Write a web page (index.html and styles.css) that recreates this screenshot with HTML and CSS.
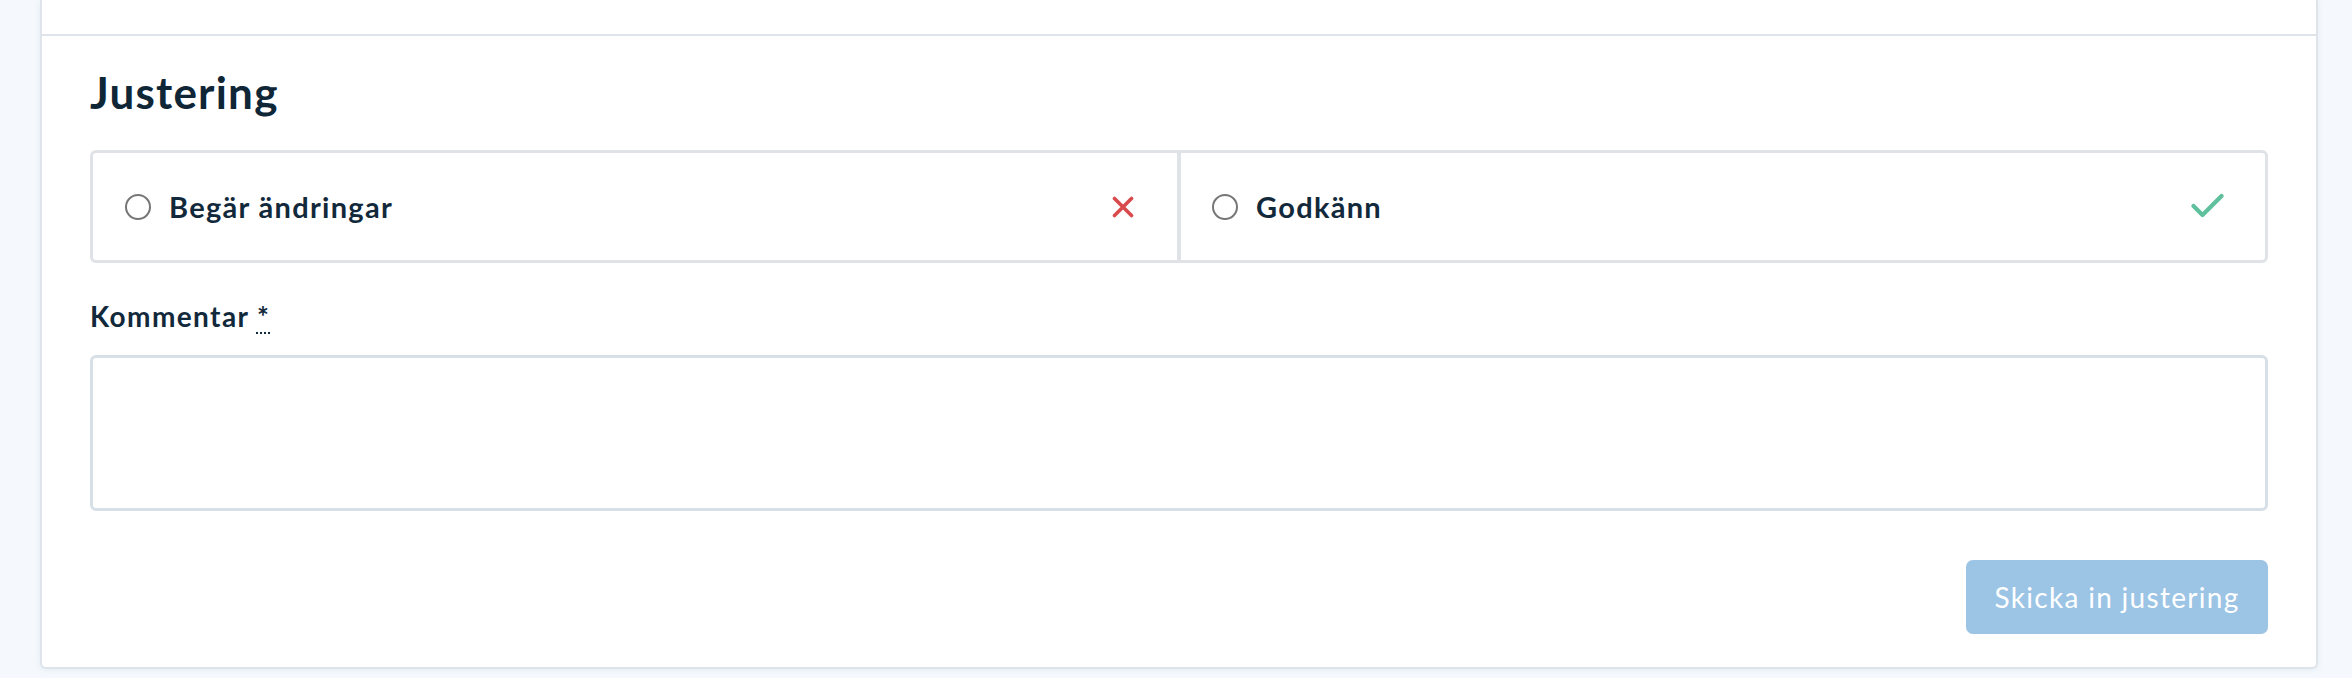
FILE: index.html
```html
<!DOCTYPE html>
<html lang="sv">
<head>
<meta charset="utf-8">
<title>Justering</title>
<link rel="stylesheet" href="styles.css">
</head>
<body>
<div class="page">
  <div class="card">
    <div class="card-top"></div>
    <section class="section">
      <h2 class="title">Justering</h2>
      <div class="choices">
        <label class="choice choice-left">
          <span class="radio"></span>
          <span class="choice-text">Begär ändringar</span>
          <svg class="icon-x" width="22" height="22" viewBox="0 0 22 22"><path d="M2.5 2.5 L19.5 19.5 M19.5 2.5 L2.5 19.5" stroke="#d94a4d" stroke-width="3.6" stroke-linecap="round" fill="none"/></svg>
        </label>
        <label class="choice choice-right">
          <span class="radio"></span>
          <span class="choice-text">Godkänn</span>
          <svg class="icon-check" width="33" height="25" viewBox="0 0 33 25"><path d="M2.5 13 L11.5 22 L30.5 3" stroke="#5ec09c" stroke-width="4.2" stroke-linecap="round" stroke-linejoin="round" fill="none"/></svg>
        </label>
      </div>
      <div class="field">
        <div class="field-label">Kommentar <abbr class="req" title="obligatoriskt">*</abbr></div>
        <div class="textarea"></div>
      </div>
      <div class="actions">
        <button class="btn" type="button">Skicka in justering</button>
      </div>
    </section>
  </div>
</div>
</body>
</html>
```

FILE: styles.css
```css
html, body {
  margin: 0;
  padding: 0;
}
body {
  background: #f5f9fd;
  font-family: "Lato", "Liberation Sans", sans-serif;
  color: #12293b;
}
.page {
  padding: 0 34px 12px 40px;
}
.card {
  background: #ffffff;
  border: 2px solid #dfe4ea;
  border-top: none;
  border-radius: 0 0 6px 6px;
  box-shadow: 0 1px 6px rgba(140, 170, 200, 0.18);
}
.card-top {
  height: 34px;
  border-bottom: 2px solid #dfe4ea;
}
.section {
  padding: 0 48px 33px 48px;
}
.title {
  margin: 0;
  padding-top: 26px;
  font-size: 44px;
  font-weight: 700;
  line-height: 60px;
  color: #0f2637;
  letter-spacing: 1.2px;
}
.choices {
  display: grid;
  grid-template-columns: calc(50% - 2px) 1fr;
  margin-top: 28px;
}
.choice {
  box-sizing: border-box;
  display: flex;
  align-items: center;
  height: 113px;
  border: 3px solid #dfe2e7;
  min-width: 0;
}
.choice-left {
  border-right: none;
  border-radius: 6px 0 0 6px;
  padding: 0 43px 0 32px;
}
.choice-right {
  border-left-width: 4px;
  border-radius: 0 6px 6px 0;
  padding: 0 41px 0 31px;
}
.radio {
  width: 22px;
  height: 22px;
  border: 2px solid #767676;
  border-radius: 50%;
  flex: none;
}
.choice-text {
  flex: 1;
  margin-left: 18px;
  font-size: 29px;
  font-weight: 700;
  color: #12293b;
  letter-spacing: 1.3px;
}
.icon-x, .icon-check {
  flex: none;
  display: block;
}
.icon-check {
  margin-top: -2px;
}
.field {
  margin-top: 37px;
}
.field-label {
  font-size: 28px;
  font-weight: 700;
  line-height: 32px;
  color: #12293b;
  letter-spacing: 1.4px;
}
.req {
  text-decoration: underline dotted;
  text-underline-offset: 5px;
  text-decoration-thickness: 2px;
}
.textarea {
  margin-top: 23px;
  height: 150px;
  border: 3px solid #d8e0e7;
  border-radius: 6px;
  background: #fff;
}
.actions {
  display: flex;
  justify-content: flex-end;
  margin-top: 49px;
}
.btn {
  width: 302px;
  height: 74px;
  border: none;
  border-radius: 7px;
  background: #9cc4e5;
  color: #ffffff;
  font-family: "Lato", "Liberation Sans", sans-serif;
  font-size: 28px;
  font-weight: 400;
  letter-spacing: 1.3px;
  padding: 0;
}
```
